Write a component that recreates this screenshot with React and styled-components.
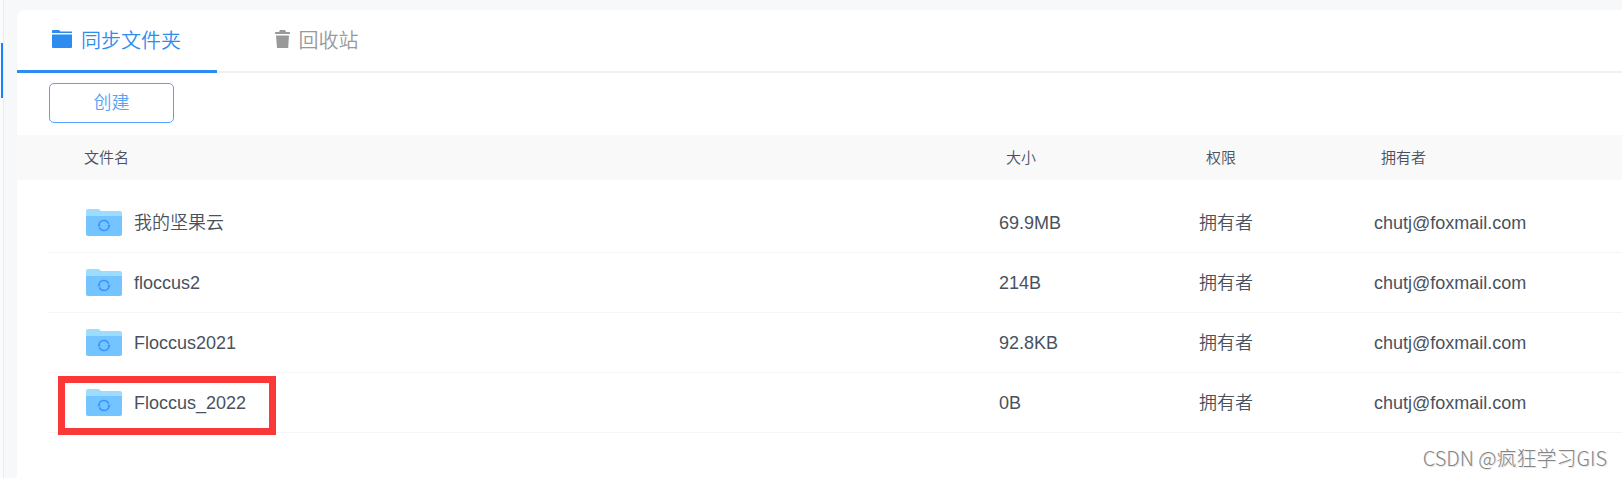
import React, { useState } from 'react';
import styled, { createGlobalStyle } from 'styled-components';

const GlobalStyle = createGlobalStyle`
  * {
    box-sizing: border-box;
  }

  body {
    margin: 0;
    background-color: #f7f8fa;
    color: #48525e;
    font-family: 'Liberation Sans', 'Noto Sans CJK SC', sans-serif;
    font-weight: 350;
  }

  button {
    font-family: inherit;
    font-weight: inherit;
    cursor: pointer;
  }
`;

const Page = styled.div`
  position: relative;
  display: flex;
  min-height: 100vh;
  overflow: hidden;
`;

const Rail = styled.div`
  flex: none;
  width: 4px;
  padding: 43px 0 0 1px;
  background-color: #fafbfc;
  border-right: 1px solid #ebecee;
`;

const RailMarker = styled.div`
  height: 55px;
  background-color: #1682fc;
`;

const Panel = styled.main`
  flex: 1;
  min-width: 0;
  margin: 10px 0 0 13px;
  background-color: #fff;
  border-top-left-radius: 8px;
`;

const Tabs = styled.nav`
  display: flex;
  height: 63px;
  box-shadow: inset 0 -2px #f0f0f0;
`;

const Tab = styled.button`
  display: flex;
  align-items: center;
  justify-content: center;
  gap: 9px;
  width: 200px;
  padding: 2px 1px 0 0;
  border: 0;
  border-bottom: 3px solid ${({ $active }) => ($active ? '#2d8cf0' : 'transparent')};
  background: none;
  color: ${({ $active }) => ($active ? '#2d8cf0' : '#999')};
  font-size: 20px;
  line-height: 24px;
`;

const Toolbar = styled.div`
  padding: 10px 32px 12px;
`;

const CreateButton = styled.button`
  display: block;
  width: 125px;
  height: 40px;
  padding: 0;
  border: 1px solid #57a3f9;
  border-radius: 5px;
  background-color: #fff;
  color: #57a3f9;
  font-size: 18px;
  line-height: 24px;
`;

const Table = styled.table`
  width: 100%;
  table-layout: fixed;
  border-collapse: separate;
  border-spacing: 0;
  text-align: left;

  tbody::before {
    content: '';
    display: block;
    height: 13px;
  }
`;

const HeadCell = styled.th`
  width: ${({ $width }) => $width || 'auto'};
  height: 45px;
  padding: 0 0 0 ${({ $first }) => ($first ? '67px' : '7px')};
  background-color: #f9f9f9;
  font-size: 15px;
  font-weight: inherit;
  line-height: 24px;
`;

const Cell = styled.td`
  height: 60px;
  padding: 0;
  border-bottom: 1px solid #f5f5f5;
  font-size: 18px;
  line-height: 24px;
`;

const NameCell = styled.td`
  padding: 0 0 0 30px;
`;

const FileName = styled.div`
  position: relative;
  display: flex;
  align-items: center;
  gap: 12px;
  height: 60px;
  padding-left: 39px;
  border-bottom: 1px solid #f5f5f5;
  font-size: 18px;
  line-height: 24px;
`;

const Highlight = styled.span`
  position: absolute;
  top: 3px;
  left: 11px;
  width: 218px;
  height: 59px;
  border: 7px solid #fb3838;
  pointer-events: none;
`;

const Watermark = styled.div`
  position: absolute;
  right: 15px;
  bottom: 8px;
  color: #858585;
  font-family: 'Noto Sans CJK SC', sans-serif;
  font-size: 20px;
  font-weight: 300;
  line-height: 24px;
  text-shadow: 1px 1px #e6e6e6;
`;

const TabFolderIcon = () => (
  <svg width='20' height='24' viewBox='0 0 20 24' fill='currentColor' aria-hidden='true'>
    <path d='M0 4V2Q0 1 1 1h6l1.500 1.500H20V4z' />
    <path d='M0 5.500h20V18q0 1-1 1H1q-1 0-1-1z' />
  </svg>
);

const TrashIcon = () => (
  <svg width='15' height='24' viewBox='0 0 15 24' fill='currentColor' aria-hidden='true'>
    <path d='M0 5V3.600Q0 3 1 3h3l1-2h5l1 2h3q1 0 1 .6V5z' />
    <path d='M1 6.500h13l-.8 12.500H2z' />
  </svg>
);

const SyncFolderIcon = () => (
  <svg width='36' height='28' viewBox='0 0 36 28' aria-hidden='true'>
    <path d='M0 2q0-2 2-2h10q1 0 1.700.7L15 2h19q2 0 2 2v8H0z' fill='#9ddcff' />
    <path d='M0 7h36v18q0 2-2 2H2q-2 0-2-2z' fill='#74c5ff' />
    <g fill='none' stroke='#3a95fb' strokeWidth='1.500'>
      <path d='M13 16.500A5 5 0 0 1 22.700 14.800' />
      <path d='M23 16.500A5 5 0 0 1 13.300 18.200' />
    </g>
    <path d='M11.300 17.200h3.600l-2-2.400zM21.100 15.800h3.600l-1.600 2.400z' fill='#3a95fb' />
  </svg>
);

const files = [
  { name: '我的坚果云', size: '69.9MB' },
  { name: 'floccus2', size: '214B' },
  { name: 'Floccus2021', size: '92.8KB' },
  { name: 'Floccus_2022', size: '0B', highlighted: true },
];

const App = () => {
  const [tab, setTab] = useState('folders');

  return (
    <Page>
      <GlobalStyle />
      <Rail>
        <RailMarker />
      </Rail>
      <Panel>
        <Tabs>
          <Tab $active={tab === 'folders'} onClick={() => setTab('folders')}>
            <TabFolderIcon />
            同步文件夹
          </Tab>
          <Tab $active={tab === 'trash'} onClick={() => setTab('trash')}>
            <TrashIcon />
            回收站
          </Tab>
        </Tabs>
        <Toolbar>
          <CreateButton>创建</CreateButton>
        </Toolbar>
        <Table>
          <thead>
            <tr>
              <HeadCell $first>文件名</HeadCell>
              <HeadCell $width='200px'>大小</HeadCell>
              <HeadCell $width='175px'>权限</HeadCell>
              <HeadCell $width='248px'>拥有者</HeadCell>
            </tr>
          </thead>
          <tbody>
            {files.map((file) => (
              <tr key={file.name}>
                <NameCell>
                  <FileName>
                    <SyncFolderIcon />
                    {file.name}
                    {file.highlighted && <Highlight />}
                  </FileName>
                </NameCell>
                <Cell>{file.size}</Cell>
                <Cell>拥有者</Cell>
                <Cell>chutj@foxmail.com</Cell>
              </tr>
            ))}
          </tbody>
        </Table>
      </Panel>
      <Watermark>CSDN @疯狂学习GIS</Watermark>
    </Page>
  );
};

export default App;
